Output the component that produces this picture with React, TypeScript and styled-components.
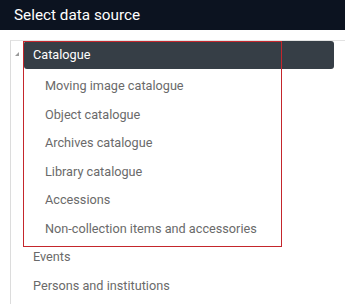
import styled, { createGlobalStyle } from "styled-components";

const GlobalStyle = createGlobalStyle`
  html, body {
    margin: 0;
    padding: 0;
    background: #ffffff;
    font-family: Roboto, "Liberation Sans", Arial, sans-serif;
  }
`;

const catalogueChildren = [
  "Moving image catalogue",
  "Object catalogue",
  "Archives catalogue",
  "Library catalogue",
  "Accessions",
  "Non-collection items and accessories",
];

const otherSources = ["Events", "Persons and institutions"];

export default function App() {
  return (
    <Dialog>
      <GlobalStyle />
      <TitleBar>Select data source</TitleBar>
      <TreePanel>
        <Highlight />
        <TreeNode>
          <Toggle viewBox="0 0 5 5">
            <polygon points="5,0 5,5 0,5" />
          </Toggle>
          <NodeLabel $selected>Catalogue</NodeLabel>
          <ChildList>
            {catalogueChildren.map((name) => (
              <NodeLabel key={name} $child>
                {name}
              </NodeLabel>
            ))}
          </ChildList>
        </TreeNode>
        {otherSources.map((name) => (
          <NodeLabel key={name}>{name}</NodeLabel>
        ))}
      </TreePanel>
    </Dialog>
  );
}

const Dialog = styled.div`
  width: 345px;
  height: 304px;
  overflow: hidden;
`;

const TitleBar = styled.div`
  height: 30px;
  line-height: 30px;
  padding-left: 14px;
  background: #0c1320;
  color: #ffffff;
  font-size: 15.3px;
`;

const TreePanel = styled.div`
  position: relative;
  margin: 10px 0 0 10px;
  padding: 0 11px 0 13px;
  border-left: 1px solid #dcdcdc;
  border-top: 1px solid #e2e2e2;
  height: 270px;
`;

const Highlight = styled.div`
  position: absolute;
  left: 12px;
  top: 0;
  width: 257px;
  height: 204px;
  border: 1px solid #c4262c;
  pointer-events: none;
  z-index: 2;
`;

const TreeNode = styled.div`
  position: relative;
`;

const Toggle = styled.svg`
  position: absolute;
  left: -9px;
  top: 11px;
  width: 4px;
  height: 4px;
  fill: #9a9a9a;
`;

const ChildList = styled.div`
  display: flex;
  flex-direction: column;
  padding-top: 2px;
`;

const NodeLabel = styled.div<{ $selected?: boolean; $child?: boolean }>`
  height: ${({ $selected }) => ($selected ? "28px" : "28.5px")};
  line-height: ${({ $selected }) => ($selected ? "28px" : "29px")};
  padding-left: ${({ $child }) => ($child ? "21px" : "9px")};
  font-size: 12.7px;
  white-space: nowrap;
  color: ${({ $selected }) => ($selected ? "#ffffff" : "#6a6a6a")};
  background: ${({ $selected }) => ($selected ? "#363e46" : "transparent")};
  border-radius: ${({ $selected }) => ($selected ? "3px" : "0")};
`;
